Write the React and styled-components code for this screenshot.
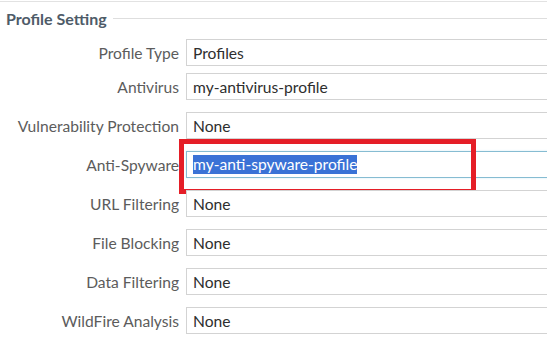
import styled, { createGlobalStyle } from "styled-components";

const GlobalStyle = createGlobalStyle`
  html, body {
    margin: 0;
    padding: 0;
    background: #ffffff;
    overflow: hidden;
  }
  body {
    font-family: Lato, "Open Sans", sans-serif;
  }
`;

const rows = [
    { label: "Profile Type", value: "Profiles", tight: true },
    { label: "Antivirus", value: "my-antivirus-profile" },
    { label: "Vulnerability Protection", value: "None" },
    { label: "Anti-Spyware", value: "my-anti-spyware-profile", focused: true },
    { label: "URL Filtering", value: "None" },
    { label: "File Blocking", value: "None" },
    { label: "Data Filtering", value: "None" },
    { label: "WildFire Analysis", value: "None" },
];

function App() {
    return (
        <Page>
            <GlobalStyle />
            <Fieldset>
                <Legend>
                    <LegendText>Profile Setting</LegendText>
                    <LegendRule />
                </Legend>
                <Form>
                    {rows.map((r) => (
                        <Row key={r.label} $tight={r.tight}>
                            <Label>{r.label}</Label>
                            <Field $focused={r.focused}>
                                {r.focused ? <Selected>{r.value}</Selected> : r.value}
                                {r.focused && <Callout />}
                            </Field>
                        </Row>
                    ))}
                </Form>
            </Fieldset>
        </Page>
    );
}

const Page = styled.div`
    width: 547px;
    height: 345px;
    overflow: hidden;
    border-top: 1px solid #e2e2e2;
    margin-top: 1px;
    box-sizing: border-box;
`;

const Fieldset = styled.div`
    display: flex;
    flex-direction: column;
`;

const Legend = styled.div`
    display: flex;
    align-items: center;
    gap: 6px;
    height: 30px;
    padding-left: 6px;
    margin-top: 1px;
`;

const LegendText = styled.span`
    font-weight: 700;
    font-size: 16px;
    color: #4e5b68;
`;

const LegendRule = styled.div`
    flex: 1;
    height: 1px;
    background: #dedede;
`;

const Form = styled.div`
    display: flex;
    flex-direction: column;
    margin-top: 6px;
`;

const Row = styled.div`
    display: grid;
    grid-template-columns: 179px 1fr;
    column-gap: 7px;
    align-items: center;
    margin-bottom: ${(p) => (p.$tight ? "7px" : "12px")};
`;

const Label = styled.div`
    text-align: right;
    font-size: 15.6px;
    color: #5c5c5c;
    white-space: nowrap;
`;

const Field = styled.div`
    position: relative;
    height: 27px;
    box-sizing: border-box;
    margin-right: -12px;
    display: flex;
    align-items: center;
    padding-left: 6px;
    font-size: 15.6px;
    color: #2e2e2e;
    background: #fff;
    border: 1px solid ${(p) => (p.$focused ? "#86bcd2" : "#d3d3d3")};
    box-shadow: ${(p) => (p.$focused ? "0 0 2px #d4ecf4" : "none")};
`;

const Selected = styled.span`
    background: #3a72d6;
    color: #ffffff;
    line-height: 19px;
`;

const Callout = styled.div`
    position: absolute;
    left: -8px;
    top: -13px;
    width: 297px;
    height: 55px;
    box-sizing: border-box;
    border: 5px solid #e51e27;
    pointer-events: none;
`;

export default App;
